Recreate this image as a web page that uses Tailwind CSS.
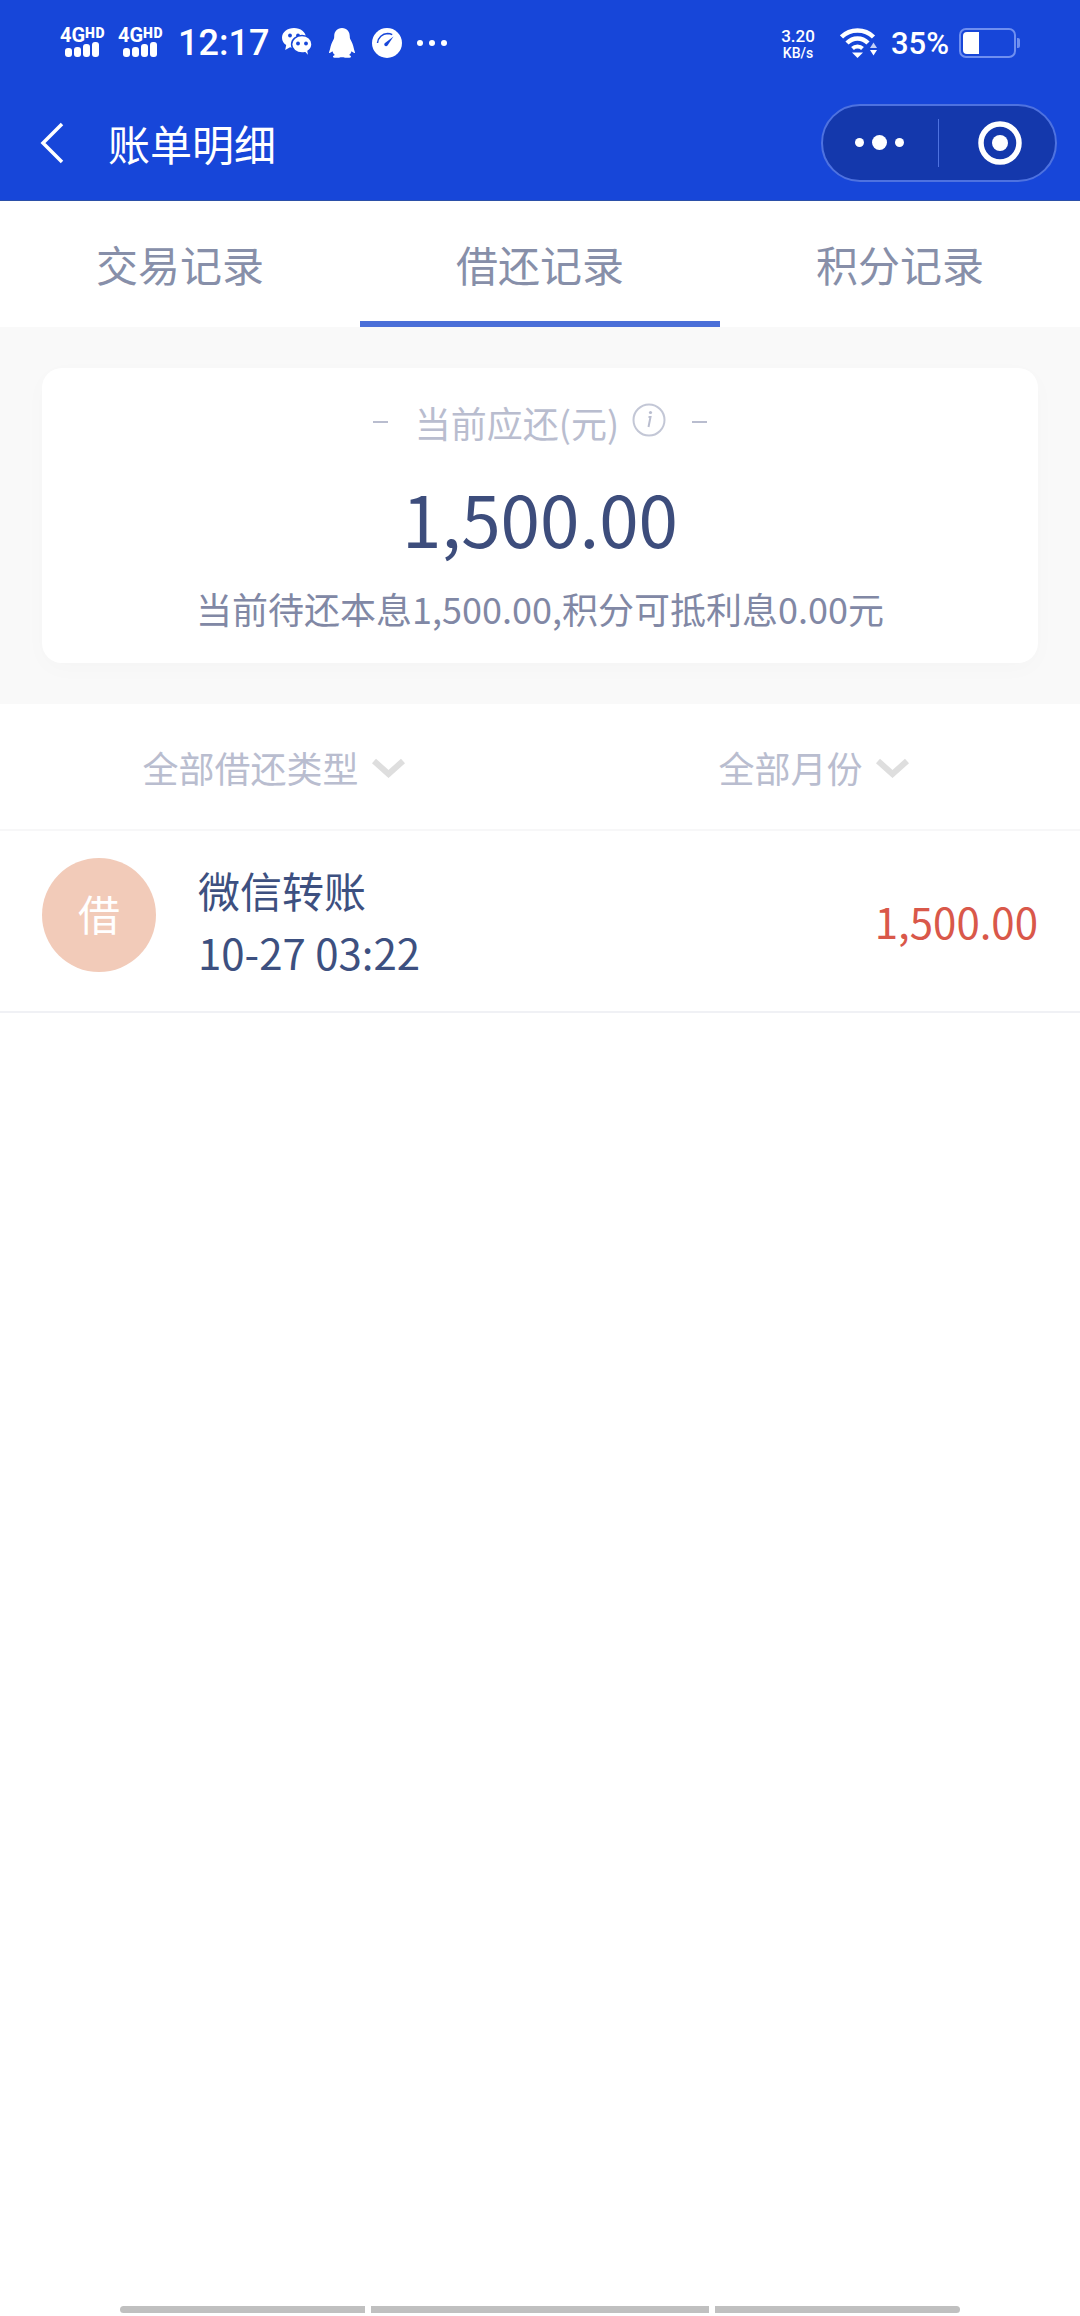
<!DOCTYPE html>
<html lang="zh-CN">
<head>
  <meta charset="UTF-8" />
  <meta name="viewport" content="width=device-width, initial-scale=1.0" />
  <title>账单明细</title>
  <script src="https://cdn.jsdelivr.net/npm/@tailwindcss/browser@4"></script>
</head>
<body class="bg-white font-['Noto_Sans_CJK_SC','Noto_Sans',sans-serif]">
  <div class="flex flex-col w-[1080px] h-[2316px] overflow-hidden">

    <!-- Header -->
    <header class="bg-[#1746d9] h-[201px] text-white shrink-0 border-b border-[#2b4fa8]">
      <!-- Status bar -->
      <div class="h-[80px] flex items-start pt-[28px] pl-[60px] pr-[60px]">
        <div class="flex flex-col w-[46px] h-[29px] mr-[12px]">
          <div class="flex items-start h-[14px] leading-[14px] font-['Roboto',sans-serif] font-bold whitespace-nowrap">
            <span class="text-[20px]">4G</span><span class="text-[14px] leading-[11px] font-black tracking-[0.5px]">HD</span>
          </div>
          <div class="flex items-end gap-[2px] pl-[5px]">
            <i class="block w-[7px] h-[9px] rounded-[3px] bg-white"></i>
            <i class="block w-[7px] h-[10px] rounded-[3px] bg-white"></i>
            <i class="block w-[7px] h-[13px] rounded-[3px] bg-white"></i>
            <i class="block w-[7px] h-[15px] rounded-[3px] bg-white"></i>
          </div>
        </div>
        <div class="flex flex-col w-[46px] h-[29px] mr-[14px]">
          <div class="flex items-start h-[14px] leading-[14px] font-['Roboto',sans-serif] font-bold whitespace-nowrap">
            <span class="text-[20px]">4G</span><span class="text-[14px] leading-[11px] font-black tracking-[0.5px]">HD</span>
          </div>
          <div class="flex items-end gap-[2px] pl-[5px]">
            <i class="block w-[7px] h-[9px] rounded-[3px] bg-white"></i>
            <i class="block w-[7px] h-[10px] rounded-[3px] bg-white"></i>
            <i class="block w-[7px] h-[13px] rounded-[3px] bg-white"></i>
            <i class="block w-[7px] h-[15px] rounded-[3px] bg-white"></i>
          </div>
        </div>
        <span class="w-[90px] mr-[14px] h-[30px] leading-[30px] text-[36px] font-medium font-['Roboto',sans-serif]">12:17</span>

        <!-- WeChat -->
        <svg class="mr-[17px]" width="30" height="30" viewBox="0 0 30 30">
          <path d="M12 0C5.500 0 0 4.200 0 9.700c0 3 1.700 5.600 4.200 7.400L3.200 22l4.800-2.800c1.300.400 2.600.600 4 .600 5.500 0 12-4.600 12-10.100C24 4.200 18.500 0 12 0z" fill="#fff"/>
          <circle cx="8" cy="7.500" r="1.900" fill="#1746d9"/>
          <circle cx="16" cy="7.500" r="1.900" fill="#1746d9"/>
          <path d="M20 7.500c-5.700 0-10.400 3.900-10.400 8.800s4.700 8.800 10.400 8.800c1.100 0 2.100-.200 3.100-.400L27 29l-.900-5.800c2.300-1.600 3.900-4 3.900-6.900 0-4.900-4.300-8.800-10-8.800z" fill="#fff" stroke="#1746d9" stroke-width="1.500"/>
          <circle cx="16" cy="15.500" r="1.900" fill="#1746d9"/>
          <circle cx="24" cy="15.500" r="1.900" fill="#1746d9"/>
        </svg>
        <!-- QQ -->
        <svg class="mr-[17px]" width="26" height="30" viewBox="0 0 26 30">
          <path d="M13 0c-5 0-7.800 3.600-7.800 8.400 0 1.400-.200 2.300-.800 3.400C3 14.500 1.800 17 1.200 20.300.800 22.500 0 24 0 24.800c0 .700 1.800-.200 3.400-1.600.500 1.500 1.400 2.900 2.500 3.900C4.300 27.600 3.600 28.400 4.200 29.200c.500.600 3.600.800 5.800.500 1-.300 2-.400 3-.400s2 .100 3 .400c2.200.300 5.300.100 5.800-.500.600-.800-.100-1.600-1.700-2.100 1.100-1 2-2.400 2.500-3.900 1.600 1.400 3.400 2.300 3.400 1.600 0-.800-.800-2.300-1.200-4.500-.600-3.300-1.800-5.800-3.200-8.500-.600-1.100-.800-2-.800-3.400C20.800 3.600 18 0 13 0z" fill="#fff"/>
        </svg>
        <!-- Gauge -->
        <svg class="mr-[12px]" width="30" height="30" viewBox="0 0 30 30">
          <circle cx="15" cy="15" r="15" fill="#fff"/>
          <path d="M5.500 15C6 9.500 10.500 5.700 15.500 5.500c1.700 0 3.300.400 4.700 1.200" fill="none" stroke="#1746d9" stroke-width="1.500"/>
          <path d="M21.500 8.500L15.500 17.500c-.800 1-2.200.900-2.900 0-.600-.800-.400-1.800.400-2.500z" fill="#1746d9"/>
        </svg>
        <!-- More dots -->
        <div class="flex gap-[6px] h-[30px] items-center ml-[3px]">
          <i class="block w-[6px] h-[6px] rounded-full bg-white"></i>
          <i class="block w-[6px] h-[6px] rounded-full bg-white"></i>
          <i class="block w-[6px] h-[6px] rounded-full bg-white"></i>
        </div>

        <div class="ml-auto flex items-start">
          <div class="flex flex-col items-center w-[36px] mr-[24px] font-['Roboto',sans-serif] font-medium">
            <span class="text-[17px] leading-[17px]">3.20</span>
            <span class="text-[14px] leading-[14px] mt-[1px]">KB/s</span>
          </div>
          <!-- Wifi -->
          <svg class="mr-[13px]" width="38" height="30" viewBox="0 0 38 30">
            <path d="M1.500 9C6 4.500 11.500 2.500 17.500 2.500S29 4.500 33.500 9" fill="none" stroke="#fff" stroke-width="4.500"/>
            <path d="M7 15C10 12 13.500 10.500 17.500 10.500s7.500 1.500 10.500 4.500" fill="none" stroke="#fff" stroke-width="4.500"/>
            <path d="M12.500 20.500c1.300-1.300 3-2 5-2s3.700.700 5 2" fill="none" stroke="#fff" stroke-width="4"/>
            <path d="M12 24.500h11l-5.500 5.500z" fill="#fff"/>
            <path d="M33.500 14.500l3.500 5.500h-7z" fill="#fff" opacity=".75"/>
            <path d="M30 22h7l-3.500 5.500z" fill="#fff"/>
          </svg>
          <span class="w-[56px] mr-[12px] text-[31px] leading-[32px] font-medium font-['Roboto',sans-serif]">35%</span>
          <!-- Battery -->
          <div class="flex items-center">
            <div class="w-[57px] h-[30px] rounded-[7px] border-[2px] border-[#6f8ff0] p-[2px]">
              <div class="w-[16px] h-full bg-white rounded-l-[4px]"></div>
            </div>
            <div class="w-[3px] h-[10px] ml-[1px] bg-[#6f8ff0] rounded-r-[2px]"></div>
          </div>
        </div>
      </div>

      <!-- Nav bar -->
      <div class="h-[120px] flex items-center pl-[40px] pr-[23px] pt-[5px]">
        <svg width="24" height="42" viewBox="0 0 24 42">
          <path d="M22 2L3 21l19 19" fill="none" stroke="#fff" stroke-width="3.500"/>
        </svg>
        <span class="ml-[44px] text-[42px] leading-none">账单明细</span>
        <div class="ml-auto w-[236px] h-[78px] rounded-full bg-[#1438ac] border-[2px] border-[#4e72e0] flex items-center">
          <div class="w-[115px] flex items-center justify-center gap-[8px] pr-[3px]">
            <i class="block w-[9px] h-[9px] rounded-full bg-white"></i>
            <i class="block w-[15px] h-[15px] rounded-full bg-white"></i>
            <i class="block w-[9px] h-[9px] rounded-full bg-white"></i>
          </div>
          <div class="w-px h-[48px] bg-[#4e72e0]"></div>
          <div class="flex-1 flex items-center justify-center pl-[6px]">
            <svg width="44" height="44" viewBox="0 0 44 44">
              <circle cx="22" cy="22" r="19" fill="none" stroke="#fff" stroke-width="5.500"/>
              <circle cx="22" cy="22" r="8" fill="#fff"/>
            </svg>
          </div>
        </div>
      </div>
    </header>

    <!-- Tabs -->
    <nav class="flex h-[126px] shrink-0 text-[42px] text-[#878fa9] bg-white">
      <div class="w-[360px] flex justify-center pt-[33px] leading-[60px]">交易记录</div>
      <div class="w-[360px] flex justify-center pt-[33px] leading-[60px] border-b-[6px] border-[#4a6fd8]">借还记录</div>
      <div class="w-[360px] flex justify-center pt-[33px] leading-[60px]">积分记录</div>
    </nav>

    <!-- Summary card -->
    <section class="bg-[#f9f9f9] h-[377px] shrink-0 px-[42px] pt-[41px]">
      <div class="bg-white h-[295px] rounded-[20px] shadow-[0_6px_24px_rgba(0,0,0,0.02)] flex flex-col items-center">
        <div class="flex items-center h-[52px] mt-[28px] text-[#b9bdcf]">
          <i class="block w-[15px] h-[2px] bg-[#b9bdcf] mr-[27px]"></i>
          <span class="text-[36px] leading-[52px]">当前应还(元)</span>
          <svg class="ml-[13px] mt-[-4px]" width="34" height="34" viewBox="0 0 34 34">
            <circle cx="17" cy="17" r="15.500" fill="none" stroke="#c3c7d6" stroke-width="2"/>
            <circle cx="18.500" cy="9.500" r="1.600" fill="#b9bdcf"/>
            <path d="M16.500 14h2l-2 10" fill="none" stroke="#b9bdcf" stroke-width="2"/>
          </svg>
          <i class="block w-[15px] h-[2px] bg-[#b9bdcf] ml-[26px]"></i>
        </div>
        <div class="text-[71px] leading-[90px] mt-[24px] text-[#3d4d7c]">1,500.00</div>
        <div class="text-[36px] leading-[50px] mt-[21px] text-[#8188a5]">当前待还本息1,500.00,积分可抵利息0.00元</div>
      </div>
    </section>

    <!-- Filters -->
    <div class="flex h-[127px] shrink-0 border-b-[2px] border-[#f7f7f8] text-[36px] text-[#b9bdcf]">
      <div class="w-1/2 flex items-center justify-center gap-[12px] pl-[8px]">
        <span>全部借还类型</span>
        <svg class="mt-[2px]" width="35" height="20" viewBox="0 0 35 20"><path d="M3 3l14.500 13L32 3" fill="none" stroke="#dedede" stroke-width="6"/></svg>
      </div>
      <div class="w-1/2 flex items-center justify-center gap-[12px] pl-[8px]">
        <span>全部月份</span>
        <svg class="mt-[2px]" width="35" height="20" viewBox="0 0 35 20"><path d="M3 3l14.500 13L32 3" fill="none" stroke="#dedede" stroke-width="6"/></svg>
      </div>
    </div>

    <!-- Record row -->
    <div class="flex items-center h-[182px] shrink-0 px-[42px] border-b-[2px] border-[#f0f1f5]">
      <div class="w-[114px] h-[114px] rounded-full bg-[#f2cbb9] text-white text-[42px] flex items-center justify-center mt-[-12px] pb-[6px]">借</div>
      <div class="ml-[42px] flex flex-col text-[42px] text-[#3d5080]">
        <span class="leading-[62px]">微信转账</span>
        <span class="leading-[62px]">10-27 03:22</span>
      </div>
      <span class="ml-auto text-[42px] text-[#d9584a] mt-[-2px]">1,500.00</span>
    </div>

    <!-- Gesture bar -->
    <div class="mt-auto mb-[3px] pl-[120px] flex gap-[6px]">
      <i class="block w-[245px] h-[7px] bg-[#c0c0c0] rounded-l-full"></i>
      <i class="block w-[338px] h-[7px] bg-[#c0c0c0]"></i>
      <i class="block w-[245px] h-[7px] bg-[#c0c0c0] rounded-r-full"></i>
    </div>
  </div>
</body>
</html>
